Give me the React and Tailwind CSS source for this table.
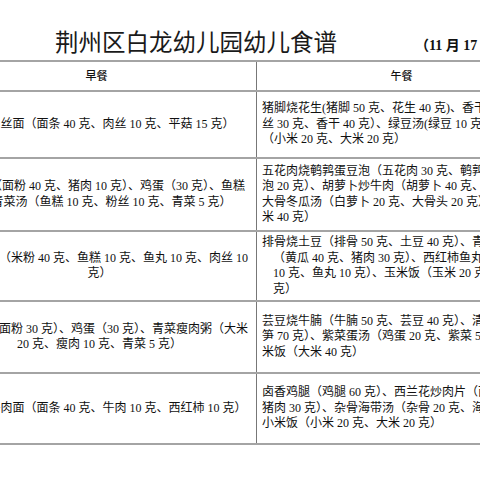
import React from "react";

// 早餐列（居中），午餐列（左对齐）
const rows = [
  {
    h: "h-[67px]",
    breakfast: ["平菇肉丝面（面条 40 克、肉丝 10 克、平菇 15 克）"],
    lunch: [
      ["猪脚烧花生(猪脚  50 克、花生 40 克)、香干炒肉丝（肉", false],
      ["丝 30 克、香干 40 克）、绿豆汤(绿豆 10 克）、二米饭", false],
      ["（小米 20 克、大米 20 克）", false],
    ],
  },
  {
    h: "h-[73px]",
    breakfast: [
      "鲜肉包（面粉 40 克、猪肉 10 克）、鸡蛋（30 克）、鱼糕",
      "鱼糕青菜汤（鱼糕 10 克、粉丝 10 克、青菜 5 克）",
    ],
    lunch: [
      ["五花肉烧鹌鹑蛋豆泡（五花肉 30 克、鹌鹑蛋 20 克、豆", false],
      ["泡 20 克）、胡萝卜炒牛肉（胡萝卜 40 克、牛肉 20 克）、", false],
      ["大骨冬瓜汤（白萝卜 20 克、大骨头 20 克）、米饭（大", false],
      ["米 40 克）", false],
    ],
  },
  {
    h: "h-[70px]",
    breakfast: ["什锦米粉（米粉 40 克、鱼糕 10 克、鱼丸 10 克、肉丝 10", "克）"],
    lunch: [
      ["排骨烧土豆（排骨 50 克、土豆 40 克）、青瓜炒肉片", false],
      ["（黄瓜 40 克、猪肉 30 克）、西红柿鱼丸汤（西红柿", true],
      ["10 克、鱼丸 10 克）、玉米饭（玉米 20 克、大米 20", true],
      ["克）", true],
    ],
  },
  {
    h: "h-[72px]",
    breakfast: [
      "小馒头（面粉 30 克）、鸡蛋（30 克）、青菜瘦肉粥（大米",
      "20 克、瘦肉 10 克、青菜 5 克）",
    ],
    lunch: [
      ["芸豆烧牛腩（牛腩 50 克、芸豆 40 克）、清炒莴笋（莴", false],
      ["笋 70 克）、紫菜蛋汤（鸡蛋 20 克、紫菜 5 克）、大", false],
      ["米饭（大米 40 克）", false],
    ],
  },
  {
    h: "h-[71px]",
    breakfast: ["西红柿牛肉面（面条 40 克、牛肉 10 克、西红柿 10 克）"],
    lunch: [
      ["卤香鸡腿（鸡腿 60 克）、西兰花炒肉片（西兰花 40 克、", false],
      ["猪肉 30 克）、杂骨海带汤（杂骨 20 克、海带 10 克）、", false],
      ["小米饭（小米 20 克、大米 20 克）", false],
    ],
  },
];

export default function App() {
  return (
    <div
      className="w-[480px] h-[480px] overflow-hidden bg-white text-[#111]"
      style={{ fontFamily: '"Liberation Serif", "Noto Sans CJK SC", serif' }}
    >
      {/* 标题 */}
      <div className="h-[60px] flex items-end pb-[2px] pl-[55px] whitespace-nowrap">
        <span className="text-[23.5px] leading-[30px] text-[#1a1a1a]">
          荆州区白龙幼儿园幼儿食谱
        </span>
        <span className="ml-[78px] text-[14px] leading-[24px] font-bold">
          （11 月 17 日—11 月 21 日）
        </span>
      </div>

      {/* 食谱表格 */}
      <div className="-ml-[57px] w-[603px] border-t-2 border-[#a4a4a4]">
        <div className="grid grid-cols-[313px_290px] h-[30px] border-b-2 border-[#a4a4a4]">
          <div className="flex items-center justify-center pr-[6px] text-[11px] font-medium">
            早餐
          </div>
          <div className="flex items-center justify-center text-[11px] font-medium border-l border-[#777]">
            午餐
          </div>
        </div>

        {rows.map((row, i) => (
          <div
            key={i}
            className={`grid grid-cols-[313px_290px] border-b-2 border-[#a4a4a4] ${row.h}`}
          >
            <div className="flex flex-col justify-center items-center text-[12px] leading-[15.5px] whitespace-nowrap">
              {row.breakfast.map((line, j) => (
                <div key={j}>{line}</div>
              ))}
            </div>
            <div className="flex flex-col justify-center border-l border-[#777] pl-[5px] text-[12px] leading-[15.5px] whitespace-nowrap overflow-hidden">
              {row.lunch.map(([line, indent], j) => (
                <div key={j} className={indent ? "pl-[11px]" : ""}>
                  {line}
                </div>
              ))}
            </div>
          </div>
        ))}
      </div>
    </div>
  );
}
